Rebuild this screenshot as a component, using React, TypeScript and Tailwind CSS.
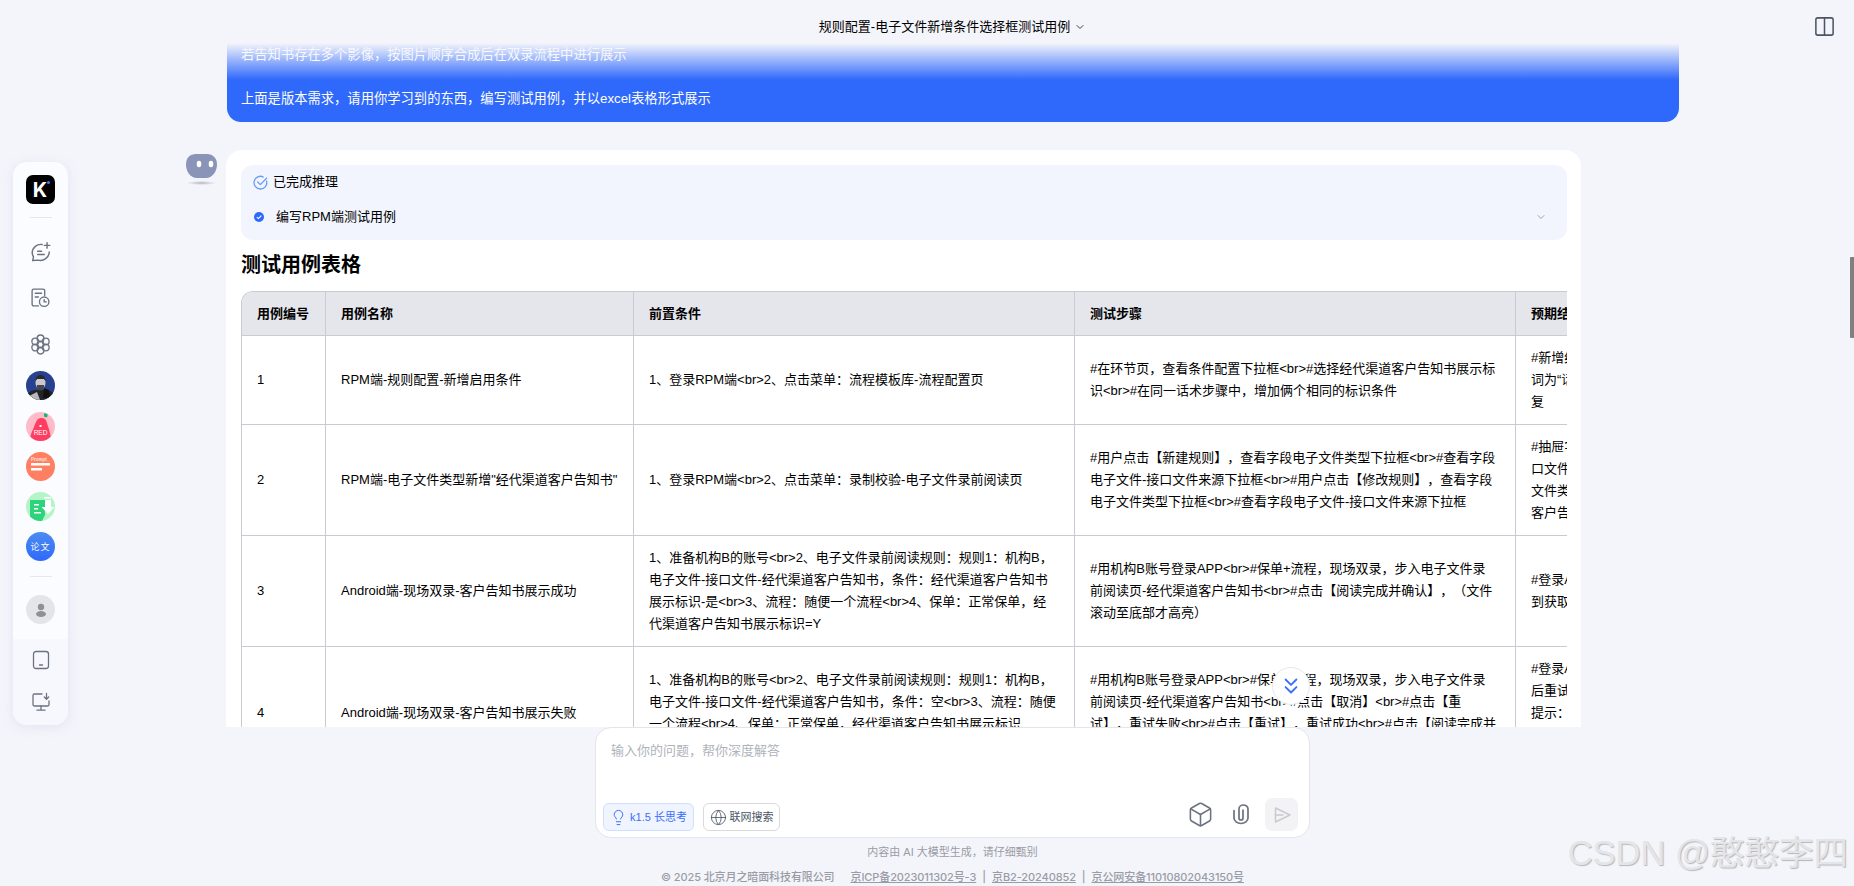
import React from "react";
import { Box, ChevronDown, ChevronsDown, Columns2, Globe, Lightbulb } from "lucide-react";

const headers = ["用例编号", "用例名称", "前置条件", "测试步骤", "预期结果"];

const rows = [
    {
        id: "1",
        name: "RPM端-规则配置-新增启用条件",
        pre: "1、登录RPM端<br>2、点击菜单：流程模板库-流程配置页",
        steps: "#在环节页，查看条件配置下拉框<br>#选择经代渠道客户告知书展示标\n识<br>#在同一话术步骤中，增加俩个相同的标识条件",
        result: "#新增经代渠道客户告知书展示标识\n词为“话术”，下拉框选项不重\n复",
    },
    {
        id: "2",
        name: "RPM端-电子文件类型新增\"经代渠道客户告知书\"",
        pre: "1、登录RPM端<br>2、点击菜单：录制校验-电子文件录前阅读页",
        steps: "#用户点击【新建规则】，查看字段电子文件类型下拉框<br>#查看字段\n电子文件-接口文件来源下拉框<br>#用户点击【修改规则】，查看字段\n电子文件类型下拉框<br>#查看字段电子文件-接口文件来源下拉框",
        result: "#抽屉字段正常展示，电子文件-接\n口文件来源可选择经代渠道，电子\n文件类型下拉框新增经代渠道\n客户告知书选项",
    },
    {
        id: "3",
        name: "Android端-现场双录-客户告知书展示成功",
        pre: "1、准备机构B的账号<br>2、电子文件录前阅读规则：规则1：机构B，电子文件-接口文件-经代渠道客户告知书，条件：经代渠道客户告知书展示标识-是<br>3、流程：随便一个流程<br>4、保单：正常保单，经代渠道客户告知书展示标识=Y",
        steps: "#用机构B账号登录APP<br>#保单+流程，现场双录，步入电子文件录\n前阅读页-经代渠道客户告知书<br>#点击【阅读完成并确认】，（文件\n滚动至底部才高亮）",
        result: "#登录APP成功，正常展示，可看\n到获取的客户告知书影像",
    },
    {
        id: "4",
        name: "Android端-现场双录-客户告知书展示失败",
        pre: "1、准备机构B的账号<br>2、电子文件录前阅读规则：规则1：机构B，电子文件-接口文件-经代渠道客户告知书，条件：空<br>3、流程：随便一个流程<br>4、保单：正常保单，经代渠道客户告知书展示标识=Y<br>5、影像获取失败",
        steps: "#用机构B账号登录APP<br>#保单+流程，现场双录，步入电子文件录\n前阅读页-经代渠道客户告知书<br>#点击【取消】<br>#点击【重\n试】，重试失败<br>#点击【重试】，重试成功<br>#点击【阅读完成并\n确认】",
        result: "#登录APP成功，点击取消\n后重试，流程正常\n提示：重试成功\n继续流程\n结束",
    },
];

function RobotAvatar() {
    return (
        <svg width="32" height="32" viewBox="0 0 32 32" className="shrink-0">
            <defs>
                <radialGradient id="robotShadow" cx="50%" cy="50%" r="50%">
                    <stop offset="0%" stopColor="#b4b6c0" />
                    <stop offset="100%" stopColor="#f4f5fb" />
                </radialGradient>
            </defs>
            <ellipse cx="15.500" cy="29" rx="15" ry="2" fill="url(#robotShadow)" />
            <path d="M10 0h11c6 0 10 4.500 10 10.500S27 24 20 24h-9C4 24 0 17 0 10.500S4 0 10 0z" fill="#8a93b8" />
            <ellipse cx="13" cy="10" rx="2.300" ry="3.300" fill="#fff" />
            <ellipse cx="25" cy="10" rx="2.300" ry="3.300" fill="#fff" />
        </svg>
    );
}

function ChatPlusIcon() {
    return (
        <svg width="22" height="22" viewBox="0 0 20 20" fill="none" stroke="#6b7280" strokeWidth="1.300" strokeLinecap="round" strokeLinejoin="round">
            <path d="M11 3.200A7.800 7.800 0 0 0 2 10.500c0 1.500.5 2.900 1.200 4L2.400 17.800l5.100-.400a8 8 0 0 0 10-7.400" />
            <path d="M7 9.300h3.500M7 12.300h6" />
            <path d="M15.500 1.500v5M13 4h5" />
        </svg>
    );
}

function HistoryIcon() {
    return (
        <svg width="21" height="21" viewBox="0 0 20 20" fill="none" stroke="#6b7280" strokeWidth="1.300" strokeLinecap="round" strokeLinejoin="round">
            <path d="M8 18H3.500A1.500 1.500 0 0 1 2 16.500v-13A1.500 1.500 0 0 1 3.500 2h9A1.500 1.500 0 0 1 14 3.500V8" />
            <path d="M5 6h6M5 9.500h3" />
            <circle cx="13.500" cy="14" r="4.500" />
            <path d="M13.500 12v2.200h2" />
        </svg>
    );
}

function FlowerIcon() {
    return (
        <svg width="21" height="21" viewBox="0 0 20 20" fill="none" stroke="#6b7280" strokeWidth="1.300">
            <circle cx="10" cy="10" r="3.200" />
            <circle cx="10" cy="4.200" r="3.200" />
            <circle cx="10" cy="15.800" r="3.200" />
            <circle cx="5" cy="7.100" r="3.200" />
            <circle cx="15" cy="7.100" r="3.200" />
            <circle cx="5" cy="12.900" r="3.200" />
            <circle cx="15" cy="12.900" r="3.200" />
        </svg>
    );
}

function TabletIcon() {
    return (
        <svg width="18" height="20" viewBox="0 0 18 20" fill="none" stroke="#6b7280" strokeWidth="1.300" strokeLinecap="round">
            <rect x="1.500" y="1.500" width="15" height="17" rx="2.500" />
            <path d="M7.500 15h3" />
        </svg>
    );
}

function MonitorDownIcon() {
    return (
        <svg width="20" height="20" viewBox="0 0 20 20" fill="none" stroke="#6b7280" strokeWidth="1.300" strokeLinecap="round" strokeLinejoin="round">
            <path d="M11 2H3.500A1.500 1.500 0 0 0 2 3.500v9A1.500 1.500 0 0 0 3.500 14h13a1.500 1.500 0 0 0 1.500-1.500V9" />
            <path d="M10 14v4M6 18.200h8" />
            <path d="M15.500 1.500v5.500M13.300 5l2.200 2.200L17.700 5" />
        </svg>
    );
}

function SendIcon() {
    return (
        <svg width="20" height="20" viewBox="0 0 20 20" fill="none" stroke="#c9cad0" strokeWidth="1.500" strokeLinecap="round" strokeLinejoin="round">
            <path d="M3.500 3v14L18 10z" />
            <path d="M3.500 10H11" />
        </svg>
    );
}

function ClipIcon() {
    return (
        <svg width="24" height="24" viewBox="0 0 24 24" fill="none" stroke="#6b7280" strokeWidth="1.700" strokeLinecap="round" strokeLinejoin="round">
            <path d="M5 8.500V16a7 5.500 0 0 0 14 0V7a4.500 4 0 0 0-9 0v9a2 2 0 0 0 4 0V8" />
        </svg>
    );
}

function PortraitAvatar() {
    return (
        <svg width="29" height="29" viewBox="0 0 29 29">
            <defs>
                <clipPath id="portraitClip">
                    <circle cx="14.500" cy="14.500" r="14.500" />
                </clipPath>
            </defs>
            <g clipPath="url(#portraitClip)">
                <rect width="29" height="29" fill="#27408f" />
                <path d="M0 24c4-4 7-5 10-5l9 0c4 0 7 1 10 5v5H0z" fill="#23242a" />
                <path d="M3 25l8-4 3 8H4z" fill="#b8b8b8" />
                <ellipse cx="14.500" cy="12" rx="5" ry="6.500" fill="#c9c9c9" />
                <path d="M9.500 10c0-4 2-6 5-6s5 2 5 6l-1.500-2h-7z" fill="#2a2a2e" />
                <path d="M11 14h7v1.500c0 2-1.500 4-3.500 4s-3.500-2-3.500-4z" fill="#44444a" />
                <path d="M18 17l5 2 1 8h-7z" fill="#111" />
            </g>
        </svg>
    );
}

function RedAvatar() {
    return (
        <div className="w-[29px] h-[29px] rounded-full bg-[#ffbcc8] overflow-hidden">
            <svg width="29" height="29" viewBox="0 0 29 29">
                <path d="M4 29c0-6 2-9 4-14s3-9 7-9c3 0 5 1 6 5s4 10 4 18z" fill="#ff3d62" />
                <path d="M18 1.500h3.500v3l-1.500 1-2-1z" fill="#14b87a" />
                <rect x="13.500" y="13" width="2" height="2" fill="#fff" />
                <text x="14.500" y="23" textAnchor="middle" fontSize="6.500" fill="#fff" fontFamily="Liberation Sans">RED</text>
            </svg>
        </div>
    );
}

function PromptAvatar() {
    return (
        <div className="w-[29px] h-[29px] rounded-full bg-[#ff7f62] overflow-hidden">
            <svg width="29" height="29" viewBox="0 0 29 29">
                <text x="5" y="9" fontSize="4.500" fontWeight="700" fill="#ffe1d9" fontFamily="Liberation Sans">Prompt_</text>
                <rect x="5" y="11" width="19" height="2.500" rx="0.500" fill="#fff" />
                <rect x="5" y="16" width="11" height="2.500" rx="0.500" fill="#fff" />
            </svg>
        </div>
    );
}

function GreenAvatar() {
    return (
        <div className="w-[29px] h-[29px] rounded-full bg-[#b5f4c9] overflow-hidden">
            <svg width="29" height="29" viewBox="0 0 29 29">
                <path d="M4 8h15v15l-3 6H4z" fill="#2ed47a" />
                <rect x="8" y="12" width="5" height="1.500" fill="#fff" />
                <rect x="8" y="16" width="4" height="1.500" fill="#fff" />
                <rect x="8" y="20" width="7" height="1.500" fill="#fff" />
                <rect x="18" y="5" width="7" height="1.500" fill="#fff" />
                <rect x="19" y="8" width="6" height="8" fill="#fff" />
                <path d="M15.500 15h13l-6.500 7z" fill="#fff" />
            </svg>
        </div>
    );
}

function Sidebar() {
    return (
        <aside className="w-[55px] h-[563px] rounded-[14px] bg-[#fbfcff] shadow-[0_2px_12px_rgba(190,197,225,0.35)] flex flex-col items-center overflow-hidden">
            <div className="mt-[13px] w-[29px] h-[29px] rounded-[7px] bg-black flex items-center justify-center relative">
                <span className="mr-px text-white font-bold text-[20px] leading-none font-['Inter','Liberation_Sans',sans-serif]">K</span>
                <span className="absolute top-[6px] right-[5px] w-[3px] h-[3px] rounded-full bg-[#2f7bff]" />
            </div>
            <div className="mt-[13px] w-[22px] h-px bg-[#e6e7ec]" />
            <div className="mt-[24px] h-5 flex items-center"><ChatPlusIcon /></div>
            <div className="mt-[25px] h-5 flex items-center"><HistoryIcon /></div>
            <div className="mt-[27px] h-5 flex items-center"><FlowerIcon /></div>
            <div className="mt-[17px] flex flex-col">
                <div className="mb-[12px]"><PortraitAvatar /></div>
                <div className="flex flex-col gap-[11px]">
                    <RedAvatar />
                    <PromptAvatar />
                    <GreenAvatar />
                    <div className="w-[29px] h-[29px] rounded-full bg-gradient-to-b from-[#4d8bf0] to-[#2f69fb] flex items-center justify-center text-white text-[9px] tracking-[1px] font-['Noto_Sans_CJK_SC',serif]">论文</div>
                </div>
            </div>
            <div className="mt-[15px] w-[22px] h-px bg-[#e6e7ec]" />
            <div className="mt-[18px] w-[29px] h-[29px] rounded-full bg-[#e4e5e9] flex items-center justify-center">
                <svg width="14" height="14" viewBox="0 0 14 14" fill="#8d9097">
                    <circle cx="7" cy="4" r="3.200" />
                    <ellipse cx="7" cy="11" rx="5" ry="3" />
                </svg>
            </div>
            <div className="mt-[15px] w-full flex-1 bg-[#f7f8fd] flex flex-col items-center pt-[11px] gap-[22px]">
                <div className="h-5"><TabletIcon /></div>
                <div className="h-5"><MonitorDownIcon /></div>
            </div>
        </aside>
    );
}

function CaseTable() {
    return (
        <div className="w-[1326px] overflow-hidden rounded-tl-[12px] border-l border-t border-[#c9cad3]">
            <table className="table-fixed border-separate border-spacing-0 w-[1714px] text-[13px] leading-[22px] text-black">
                <colgroup>
                    <col className="w-[84px]" />
                    <col className="w-[308px]" />
                    <col className="w-[441px]" />
                    <col className="w-[441px]" />
                    <col className="w-[440px]" />
                </colgroup>
                <thead>
                    <tr className="bg-[#e5e6ec]">
                        {headers.map((h) => (
                            <th key={h} className="px-[15px] py-[10.5px] text-left font-bold border-r border-b border-[#c9cad3]">{h}</th>
                        ))}
                    </tr>
                </thead>
                <tbody>
                    {rows.map((row) => (
                        <tr key={row.id}>
                            <td className="px-[15px] py-[11px] border-r border-b border-[#c9cad3]">{row.id}</td>
                            <td className="px-[15px] py-[11px] border-r border-b border-[#c9cad3]">{row.name}</td>
                            <td className="px-[15px] py-[11px] border-r border-b border-[#c9cad3]">{row.pre}</td>
                            <td className="px-[15px] py-[11px] border-r border-b border-[#c9cad3] whitespace-pre-line">{row.steps}</td>
                            <td className="px-[15px] py-[11px] border-r border-b border-[#c9cad3] whitespace-pre-line">{row.result}</td>
                        </tr>
                    ))}
                </tbody>
            </table>
        </div>
    );
}

export default function App() {
    return (
        <div className="relative w-full h-screen overflow-hidden flex bg-[#f4f5fb] text-[13px] text-black [text-spacing-trim:space-all] font-['Liberation_Sans','Noto_Sans_CJK_SC',sans-serif]">
            {/* Left rail */}
            <div className="w-[68px] shrink-0 pl-[13px] pt-[162px]">
                <Sidebar />
            </div>

            <div className="flex-1 min-w-0 flex flex-col">
                {/* Title bar */}
                <header className="h-[43px] shrink-0 flex items-center pt-[11px] pr-[18px]">
                    <div className="ml-[528px] w-[713px] flex items-center justify-center gap-1 leading-[22px]">
                        <span>规则配置-电子文件新增条件选择框测试用例</span>
                        <ChevronDown size={12} strokeWidth={2} className="text-[#374151]" />
                    </div>
                    <Columns2 size={23} strokeWidth={1.6} className="ml-auto text-[#4b5563] mb-[2px]" />
                </header>

                {/* Conversation */}
                <main className="relative flex-1 min-h-0 overflow-hidden">
                    <div className="ml-[159px] w-[1452px] bg-[#2f69fb] rounded-b-[14px] px-[14px] pt-px pb-[12px] text-[13.3px] text-white leading-[22px]">
                        <p>若告知书存在多个影像，按图片顺序合成后在双录流程中进行展示</p>
                        <p className="mt-[22px]">上面是版本需求，请用你学习到的东西，编写测试用例，并以excel表格形式展示</p>
                    </div>

                    <div className="mt-[28px] ml-[118px] flex gap-[8px]">
                        <div className="pt-[4px]"><RobotAvatar /></div>
                        <section className="w-[1355px] bg-white rounded-t-[16px] px-[15px] pt-[15px]">
                            <div className="h-[75px] w-[1326px] rounded-[12px] bg-[#f2f5fe] pt-[6px] pl-[12px] pr-[20px] leading-[22px]">
                                <div className="flex items-center gap-[5px]">
                                    <svg width="15" height="15" viewBox="0 0 16 16" fill="none" stroke="#6a9cf5" strokeWidth="1.400" strokeLinecap="round" strokeLinejoin="round">
                                        <path d="M14.500 6.500A6.800 6.800 0 1 1 11 2.100" />
                                        <path d="M5 7.500l2.800 2.800L14.500 3.500" />
                                    </svg>
                                    <span>已完成推理</span>
                                </div>
                                <div className="mt-[13px] flex items-center">
                                    <svg width="10" height="10" viewBox="0 0 10 10" className="ml-px">
                                        <circle cx="5" cy="5" r="5" fill="#2f69fb" />
                                        <path d="M2.800 5.100l1.600 1.500 2.900-2.900" fill="none" stroke="#fff" strokeWidth="1.100" />
                                    </svg>
                                    <span className="ml-[12px]">编写RPM端测试用例</span>
                                    <ChevronDown size={12} className="ml-auto text-[#9ca3af]" />
                                </div>
                            </div>
                            <h2 className="mt-[11px] mb-[12px] text-[20px] leading-[28px] font-bold">测试用例表格</h2>
                            <CaseTable />
                        </section>
                    </div>

                    {/* Fade under the title bar */}
                    <div className="absolute top-0 left-0 right-0 h-[37px] bg-gradient-to-b from-[#f4f5fb] to-transparent pointer-events-none" />

                    {/* Jump to latest */}
                    <button className="absolute left-[1204px] bottom-[22px] w-[38px] h-[38px] rounded-full bg-white border border-[#e6e8ef] flex items-center justify-center">
                        <ChevronsDown size={26} strokeWidth={1.7} className="text-[#3a6ff7]" />
                    </button>
                </main>

                {/* Input and footer */}
                <footer className="h-[159px] shrink-0 ml-[527px] w-[715px] flex flex-col items-center">
                    <div className="w-full h-[111px] rounded-[16px] bg-white border border-[#e3e5ec] flex flex-col justify-between pl-[7px] pr-[11px] pb-[6px] pt-[12px]">
                        <p className="pl-[8px] leading-[22px] text-[#b0b3bb]">输入你的问题，帮你深度解答</p>
                        <div className="flex items-end">
                            <div className="h-[28px] w-[91px] rounded-[6px] border border-[#cfdfff] bg-[#eff4ff] flex items-center justify-center gap-[3px] text-[11px] text-[#3a6ff7]">
                                <Lightbulb size={17} strokeWidth={1.4} />
                                <span>k1.5 长思考</span>
                            </div>
                            <div className="ml-[9px] h-[28px] w-[77px] rounded-[6px] border border-[#d9d9de] flex items-center justify-center gap-[3px] text-[11px] text-[#4b5563]">
                                <Globe size={17} strokeWidth={1.2} />
                                <span>联网搜索</span>
                            </div>
                            <Box size={27} strokeWidth={1.4} className="ml-auto mb-[3px] text-[#6b7280]" />
                            <div className="ml-[15px] mb-[5px]"><ClipIcon /></div>
                            <div className="ml-[12px] w-[33px] h-[33px] rounded-[7px] bg-[#f3f3f5] flex items-center justify-center">
                                <SendIcon />
                            </div>
                        </div>
                    </div>
                    <p className="mt-[6px] text-[11px] leading-[16px] text-[#9a9ca5]">内容由 AI 大模型生成，请仔细甄别</p>
                    <p className="mt-[9px] text-[11px] leading-[16px] text-[#9a9ca5] font-medium tracking-[-0.1px] whitespace-nowrap font-['Inter','Noto_Sans_CJK_SC',sans-serif]">
                        © 2025 北京月之暗面科技有限公司
                        <a className="ml-4 underline">京ICP备2023011302号-3</a>
                        <span className="mx-[6px]">|</span>
                        <a className="underline">京B2-20240852</a>
                        <span className="mx-[6px]">|</span>
                        <a className="underline">京公网安备11010802043150号</a>
                    </p>
                </footer>
            </div>

            {/* Page scrollbar thumb */}
            <div className="absolute top-[257px] right-0 w-1 h-[81px] bg-[#808080] rounded-l-[1px]" />

            {/* Watermark */}
            <span className="absolute right-[6px] bottom-[15px] text-[34.5px] leading-[36px] text-[#e4e5e8] [text-shadow:1px_1px_1px_#b5b6ba] whitespace-nowrap pointer-events-none">
                CSDN @憨憨李四
            </span>
        </div>
    );
}
